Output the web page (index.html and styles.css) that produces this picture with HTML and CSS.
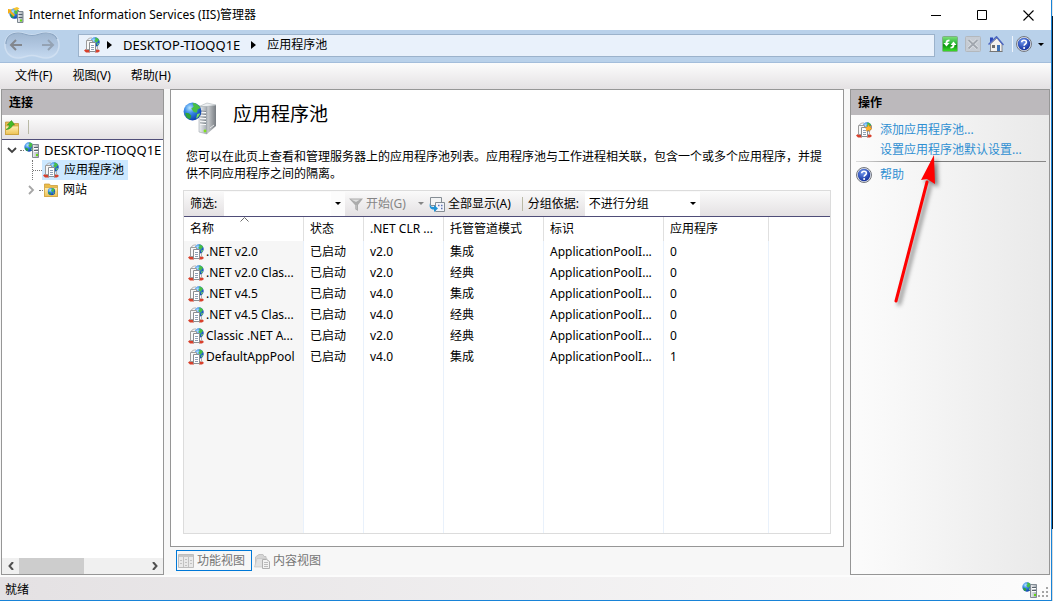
FILE: index.html
```html
<!DOCTYPE html>
<html lang="zh-CN">
<head>
<meta charset="utf-8">
<title>Internet Information Services (IIS)管理器</title>
<link rel="stylesheet" href="styles.css">
</head>
<body>
<svg class="sprite" width="0" height="0" aria-hidden="true">
  <defs>
    <radialGradient id="g-globe" cx="35%" cy="30%" r="75%"><stop offset="0" stop-color="#b8e6ff"/><stop offset=".4" stop-color="#3a8ce8"/><stop offset="1" stop-color="#0a3aa8"/></radialGradient>
    <linearGradient id="g-metal" x1="0" x2="1"><stop offset="0" stop-color="#eef0f2"/><stop offset="1" stop-color="#a3aab1"/></linearGradient>
    <linearGradient id="g-side" x1="0" x2="1"><stop offset="0" stop-color="#cfd2d5"/><stop offset="1" stop-color="#777c82"/></linearGradient>
    <linearGradient id="g-green" x1="0" x2="0" y1="0" y2="1"><stop offset="0" stop-color="#7fe07c"/><stop offset=".5" stop-color="#22b431"/><stop offset=".55" stop-color="#08900f"/><stop offset="1" stop-color="#3fe02c"/></linearGradient>
    <linearGradient id="g-folder" x1="0" x2="0" y1="0" y2="1"><stop offset="0" stop-color="#fff0b4"/><stop offset="1" stop-color="#edc254"/></linearGradient>
    <radialGradient id="g-help" cx="40%" cy="30%" r="70%"><stop offset="0" stop-color="#6f96ee"/><stop offset="1" stop-color="#122f9c"/></radialGradient>
    <linearGradient id="g-pill" x1="0" x2="0" y1="0" y2="1"><stop offset="0" stop-color="#9fb6d0"/><stop offset=".55" stop-color="#b2c8e2"/><stop offset="1" stop-color="#c6daf0"/></linearGradient>
  </defs>
  <symbol id="globe" viewBox="0 0 16 16">
    <circle cx="8" cy="8" r="7.500" fill="url(#g-globe)"/>
    <path d="M8 .8c3 0 5.500 1.700 6.700 4.300L12.500 6l-1 3-2.500-.5L7 5.500 9 4z" fill="#49c043"/>
    <path d="M2 9l3 .5 2 2-1 3C3 13.500 2 12 2 9z" fill="#2fa53a"/>
    <path d="M12 10l2.500-.5c-.6 2-2 3.600-3.500 4.500z" fill="#7be05d"/>
  </symbol>
  <symbol id="server" viewBox="0 0 16 16">
    <use href="#globe" x="0" y="0" width="10" height="10"/>
    <path d="M8.500 2.500h6v13h-6z" fill="url(#g-metal)" stroke="#828b94"/>
    <path d="M10 5.500h4M10 8.500h4" stroke="#59636d"/>
    <path d="M10 6.500h4M10 9.500h4" stroke="#fff"/>
    <path d="M12 12h2v2h-2z" fill="#63d812"/>
  </symbol>
  <symbol id="iis" viewBox="0 0 16 16">
    <use href="#globe" x="1" y="1" width="11" height="11"/>
    <path d="M0 2l4 .5L3 4l4 4-1.500 1.500L1.500 5.500 0 7z" fill="#f5ae18"/>
    <path d="M5 1.500L9 0l2.500 1.500L8 4z" fill="#f5c431"/>
    <path d="M9.500 4.500h5.500v11H9.500z" fill="url(#g-metal)" stroke="#7c8690"/>
    <path d="M10.500 7.500h4M10.500 10.500h4" stroke="#54616c"/>
    <path d="M12 12.500h2v2h-2z" fill="#63d812"/>
  </symbol>
  <symbol id="pool" viewBox="0 0 16 16">
    <use href="#globe" x="6" y="0" width="10" height="10"/>
    <path d="M0 13.500L2 12h4v3.500H2z" fill="#d8402c"/>
    <path d="M11 12.500h3.500l1.500 1.500-2 1.500h-3z" fill="#d8402c"/>
    <path d="M2.500 3.500h6v9h-6z" fill="#f7f7f7" stroke="#9c9c9c"/>
    <path d="M3.500 3C4 1.500 6 .8 8 1" fill="none" stroke="#b0b0b0"/>
    <path d="M5.500 5.500h6v9h-6z" fill="#fff" stroke="#8b8e91"/>
    <path d="M7 8.500h3M7 10.500h3M7 12.500h3" stroke="#8fa0b4"/>
    <path d="M13.500 9v4" stroke="#b0b0b0"/>
  </symbol>
  <symbol id="pool-add" viewBox="0 0 16 16">
    <use href="#pool" width="16" height="16"/>
    <path d="M12.500 2.500l.9 2 2.100-.7-.8 2 1.300 1.200-2 .5-.3 2-1.500-1.200-2 .8.400-2.100-1.400-1.300 2.100-.7z" fill="#ffb52b" stroke="#e88712" stroke-width=".5"/>
  </symbol>
  <symbol id="big-server" viewBox="0 0 34 34">
    <path d="M24 5l9-1v21l-9 8z" fill="url(#g-side)"/>
    <path d="M16 5.500l8-.5v28l-8-2z" fill="url(#g-metal)" stroke="#8f969c" stroke-width=".5"/>
    <path d="M16 5.500L24 2l9 2-9 1.500z" fill="#edf0f2" stroke="#9fa6ab" stroke-width=".5"/>
    <path d="M17 10l6 .5M17 13l6 .5M17 16l6 .5M17 19l6 .5M17 22l6 .5" stroke="#7d858c"/>
    <path d="M17 11l6 .5M17 14l6 .5M17 17l6 .5M17 20l6 .5M17 23l6 .5" stroke="#fff"/>
    <circle cx="22" cy="30" r="1.400" fill="#7fe01b"/>
    <path d="M27 27l4-3" stroke="#e4e6e8"/>
    <use href="#globe" x="0" y="1" width="19" height="19"/>
  </symbol>
  <symbol id="help" viewBox="0 0 16 16">
    <circle cx="8" cy="8" r="7.500" fill="#dfe3ea" stroke="#74787f"/>
    <circle cx="8" cy="8" r="6.200" fill="url(#g-help)"/>
    <path d="M5.700 6.300C5.700 3.500 10.400 3.500 10.400 6.200 10.400 8 8.100 8 8.100 9.800" fill="none" stroke="#fff" stroke-width="1.600"/>
    <circle cx="8.100" cy="12" r="1" fill="#fff"/>
  </symbol>
  <symbol id="refresh" viewBox="0 0 16 16">
    <rect x=".5" y=".5" width="15" height="15" rx="1" fill="url(#g-green)" stroke="#7fae86"/>
    <path d="M7.500 3.500C5 3.500 3.500 4.500 3.500 7H1.500l3 3.500 3-3.500h-2c0-1 .5-1.800 2-1.800z" fill="#fff"/>
    <path d="M8.500 12.500c2.500 0 4-1 4-3.500h2l-3-3.500-3 3.500h2c0 1-.5 1.800-2 1.800z" fill="#fff"/>
  </symbol>
  <symbol id="stop" viewBox="0 0 16 16">
    <rect x=".5" y=".5" width="15" height="15" rx="1" fill="#c6ccd4" stroke="#b3b8bd"/>
    <path d="M3.500 4l9 8.500M12.500 4l-9 8.500" stroke="#dfe3e7" stroke-width="3.200"/>
    <path d="M3.500 4l9 8.500M12.500 4l-9 8.500" stroke="#a0a6ae" stroke-width="1.800"/>
  </symbol>
  <symbol id="home" viewBox="0 0 16 16">
    <path d="M2 1.500h3V5L2 7z" fill="#2946b8"/>
    <path d="M2.500 8L9 2l5 6v7.500H2.500z" fill="#f3f1ee" stroke="#777" stroke-width=".8"/>
    <path d="M.5 8.500L8.500.8l7 8.200" fill="none" stroke="#4c66c0" stroke-width="1.500"/>
    <path d="M4 9h3v3H4z" fill="#6d6d6d"/><path d="M9 9h3v6.500H9z" fill="#3d72b6"/>
    <path d="M1.500 15.500h13" stroke="#757575"/>
  </symbol>
  <symbol id="folder-up" viewBox="0 0 16 16">
    <path d="M1.500 3h7l1 1.500h5v11h-13z" fill="#e8bb50" stroke="#b58c2c" stroke-width=".7"/>
    <path d="M1.500 7h13v8.500h-13z" fill="url(#g-folder)" stroke="#c79e3a" stroke-width=".7"/>
    <path d="M2 10.500c2-1 3-2.500 3.500-4.500H3.200L7.500 1.500 10.500 6H8.500c-.5 2.500-3 4.500-6.500 4.500z" fill="#43bb28" stroke="#2b8a1b" stroke-width=".5"/>
  </symbol>
  <symbol id="sites" viewBox="0 0 16 16">
    <path d="M1.500 2h5l1 1.500h7v11h-13z" fill="#edbd48" stroke="#c49431" stroke-width=".7"/>
    <path d="M1.500 5.500h13v9h-13z" fill="url(#g-folder)" stroke="#d1a442" stroke-width=".7"/>
    <use href="#globe" x="4.500" y="5.500" width="8" height="8"/>
  </symbol>
  <symbol id="funnel" viewBox="0 0 16 16">
    <path d="M1 2.500h14L10 9v6l-3-2V9z" fill="#ababab"/>
    <path d="M3 3.500h9L8 6z" fill="#dedede"/><path d="M8 9v4" stroke="#ccc"/>
  </symbol>
  <symbol id="show-all" viewBox="0 0 16 16">
    <path d="M1.500 1.500h11v8h-11z" fill="#f2f3f4" stroke="#858d94"/>
    <path d="M6.500 6.500h9v9h-9z" fill="#f2f4fa" stroke="#858d94"/>
    <path d="M9 9.500h1.500M12 9.500h1.500M12 12.500h1.500" stroke="#6172b2" stroke-width="1.500"/>
    <path d="M1 7c0 3.500 1.500 4 4 4V9l4 3.500L5 16v-2.500C1 13.500 0 11 1 7z" fill="#1f92d6"/>
  </symbol>
  <symbol id="features" viewBox="0 0 16 16">
    <path d="M.5 1.500h15v13H.5z" fill="#e9e9e9" stroke="#bdbdbd"/>
    <path d="M1 2h14v2H1z" fill="#c6c6c6"/><path d="M5.500 4v10M10.500 4v10" stroke="#c2c2c2"/>
    <path d="M2 7.500h2M2 10.500h2M7 6.500h2M7 9.500h2M7 12.500h2M12 7.500h2M12 10.500h2" stroke="#c2c2c2"/>
  </symbol>
  <symbol id="content" viewBox="0 0 16 16">
    <path d="M1.500 4L5 1.500h4l1 2h2v10H1.500z" fill="#d5d5d5" stroke="#c2c2c2"/>
    <path d="M3 5.500h10V14H.5z" fill="#e1e1e1" stroke="#c4c4c4" stroke-width=".7"/>
    <path d="M8.500 6.500h4l3 2v7h-7z" fill="#f2f2f2" stroke="#b0b0b0"/>
    <path d="M10 9.500h4M10 11.500h4M10 13.500h4" stroke="#bcbcbc"/>
  </symbol>
  <symbol id="tri-right" viewBox="0 0 5 8"><path d="M0 0l5 4-5 4z"/></symbol>
  <symbol id="tri-down" viewBox="0 0 6 3"><path d="M0 0h6L3 3z"/></symbol>
</svg>

<div class="app">
  <header class="titlebar">
    <svg class="icon"><use href="#iis"/></svg>
    <h1 class="window-title">Internet Information Services (IIS)管理器</h1>
    <button class="win-btn" aria-label="最小化"><svg width="11" height="11"><path d="M0 5.500h10" stroke="#000"/></svg></button>
    <button class="win-btn" aria-label="最大化"><svg width="11" height="11"><path d="M.5.5h9v9h-9z" fill="none" stroke="#000"/></svg></button>
    <button class="win-btn" aria-label="关闭"><svg width="11" height="11"><path d="M.5.5l10 10M10.500.5l-10 10" stroke="#000" stroke-width="1.100"/></svg></button>
  </header>

  <nav class="navbar">
    <div class="history">
      <svg class="pill" width="56" height="29" aria-hidden="true"><path d="M14 1.500C20 1.500 22 4 28 4S36 1.500 42 1.500C50 1.500 55 7 55 14S50 27 42 27C36 27 34 24.500 28 24.500S20 27 14 27C6 27 1 21 1 14S6 1.500 14 1.500z" fill="url(#g-pill)" stroke="#cfdff1" stroke-width="1.500"/><path d="M2 13C2 6 7 2 14 2 20 2 22 4.500 28 4.500S36 2 42 2C47 2 51 4 53 8" fill="none" stroke="#8ba5c2" stroke-width="1.200"/></svg>
      <button class="history-btn" aria-label="后退"><svg width="13" height="12"><path d="M7 1L2 6l5 5M2 6h11" fill="none" stroke="#83878e" stroke-width="2"/></svg></button>
      <button class="history-btn" aria-label="前进"><svg width="13" height="12"><path d="M6 1l5 5-5 5M11 6H0" fill="none" stroke="#94a2b3" stroke-width="2"/></svg></button>
    </div>
    <div class="address">
      <svg class="icon"><use href="#pool"/></svg>
      <svg class="crumb-arrow"><use href="#tri-right"/></svg>
      <a class="crumb host" href="#">DESKTOP-TIOQQ1E</a>
      <svg class="crumb-arrow"><use href="#tri-right"/></svg>
      <a class="crumb" href="#">应用程序池</a>
    </div>
    <div class="nav-tools">
      <button aria-label="刷新"><svg class="icon"><use href="#refresh"/></svg></button>
      <button aria-label="停止"><svg class="icon"><use href="#stop"/></svg></button>
      <button aria-label="主页"><svg class="icon"><use href="#home"/></svg></button>
      <button class="help-btn" aria-label="帮助"><svg class="icon"><use href="#help"/></svg><svg class="caret"><use href="#tri-down"/></svg></button>
    </div>
  </nav>

  <div class="menubar">
    <button>文件(F)</button>
    <button>视图(V)</button>
    <button>帮助(H)</button>
  </div>

  <main class="workspace">
    <aside class="panel connections">
      <h2 class="panel-title">连接</h2>
      <div class="conn-toolbar"><button aria-label="上一级"><svg class="icon"><use href="#folder-up"/></svg></button><span class="divider"></span></div>
      <ul class="tree">
        <li class="node root">
          <svg class="twisty" viewBox="0 0 10 10"><path d="M1 3l4 4 4-4" fill="none" stroke="#404040" stroke-width="1.800"/></svg>
          <span class="dots"></span><svg class="icon"><use href="#server"/></svg><span class="label host">DESKTOP-TIOQQ1E</span>
        </li>
        <li class="node child pools">
          <span class="dots long"></span><span class="selected"><svg class="icon"><use href="#pool"/></svg><span class="label">应用程序池</span></span>
        </li>
        <li class="node child">
          <svg class="twisty" viewBox="0 0 10 10"><path d="M3 1l4 4-4 4" fill="none" stroke="#a6a6a6" stroke-width="1.800"/></svg>
          <span class="dots"></span><svg class="icon"><use href="#sites"/></svg><span class="label">网站</span>
        </li>
      </ul>
      <div class="scrollbar">
        <button aria-label="向左滚动"><svg width="6" height="8"><path d="M5 0L1.500 4 5 8" fill="none" stroke="#505050" stroke-width="2"/></svg></button>
        <div class="track"><div class="thumb"></div></div>
        <button aria-label="向右滚动"><svg width="6" height="8"><path d="M1 0l3.500 4L1 8" fill="none" stroke="#505050" stroke-width="2"/></svg></button>
      </div>
    </aside>

    <section class="center">
      <div class="panel feature">
        <div class="feature-head"><svg class="big-icon"><use href="#big-server"/></svg><h2 class="feature-title">应用程序池</h2></div>
        <p class="description">您可以在此页上查看和管理服务器上的应用程序池列表。应用程序池与工作进程相关联，包含一个或多个应用程序，并提供不同应用程序之间的隔离。</p>
        <div class="list">
          <div class="list-toolbar">
            <label class="filter-label" for="filter">筛选:</label>
            <div class="combo"><input id="filter" type="text"><button class="combo-btn" aria-label="展开"><svg class="caret"><use href="#tri-down"/></svg></button></div>
            <button class="tool start" disabled><svg class="icon"><use href="#funnel"/></svg>开始(G)<svg class="caret"><use href="#tri-down"/></svg></button>
            <button class="tool"><svg class="icon"><use href="#show-all"/></svg>全部显示(A)</button>
            <span class="divider"></span>
            <label class="group-label" for="group">分组依据:</label>
            <div class="combo group"><select id="group"><option>不进行分组</option></select><svg class="caret"><use href="#tri-down"/></svg></div>
          </div>
          <table class="grid">
            <colgroup><col class="w-name"><col class="w-state"><col class="w-clr"><col class="w-mode"><col class="w-id"><col class="w-apps"><col></colgroup>
            <thead><tr><th><svg class="sort" width="9" height="5"><path d="M.5 4.500l4-4 4 4" fill="none" stroke="#6b6b6b"/></svg>名称</th><th>状态</th><th>.NET CLR ...</th><th>托管管道模式</th><th>标识</th><th>应用程序</th><th></th></tr></thead>
            <tbody>
              <tr><td><span class="cell"><svg class="icon"><use href="#pool"/></svg>.NET v2.0</span></td><td>已启动</td><td>v2.0</td><td>集成</td><td>ApplicationPoolI...</td><td>0</td><td></td></tr>
              <tr><td><span class="cell"><svg class="icon"><use href="#pool"/></svg>.NET v2.0 Clas...</span></td><td>已启动</td><td>v2.0</td><td>经典</td><td>ApplicationPoolI...</td><td>0</td><td></td></tr>
              <tr><td><span class="cell"><svg class="icon"><use href="#pool"/></svg>.NET v4.5</span></td><td>已启动</td><td>v4.0</td><td>集成</td><td>ApplicationPoolI...</td><td>0</td><td></td></tr>
              <tr><td><span class="cell"><svg class="icon"><use href="#pool"/></svg>.NET v4.5 Clas...</span></td><td>已启动</td><td>v4.0</td><td>经典</td><td>ApplicationPoolI...</td><td>0</td><td></td></tr>
              <tr><td><span class="cell"><svg class="icon"><use href="#pool"/></svg>Classic .NET A...</span></td><td>已启动</td><td>v2.0</td><td>经典</td><td>ApplicationPoolI...</td><td>0</td><td></td></tr>
              <tr><td><span class="cell"><svg class="icon"><use href="#pool"/></svg>DefaultAppPool</span></td><td>已启动</td><td>v4.0</td><td>集成</td><td>ApplicationPoolI...</td><td>1</td><td></td></tr>
              <tr class="filler"><td></td><td></td><td></td><td></td><td></td><td></td><td></td></tr>
            </tbody>
          </table>
        </div>
      </div>
      <div class="views">
        <button class="view active"><svg class="icon"><use href="#features"/></svg>功能视图</button>
        <button class="view"><svg class="icon"><use href="#content"/></svg>内容视图</button>
      </div>
    </section>

    <aside class="panel actions">
      <h2 class="panel-title">操作</h2>
      <div class="action-list">
        <a class="action" href="#"><svg class="icon"><use href="#pool-add"/></svg>添加应用程序池...</a>
        <a class="action" href="#"><span class="icon"></span>设置应用程序池默认设置...</a>
        <hr class="rule">
        <a class="action" href="#"><svg class="icon"><use href="#help"/></svg>帮助</a>
      </div>
      <svg class="pointer" width="60" height="160" aria-hidden="true"><path d="M16 146L47 27" stroke="#f00" stroke-width="3" stroke-linecap="round"/><path d="M54 0L41 25l6-1 8 5z" fill="#f00"/></svg>
    </aside>
  </main>

  <footer class="statusbar">
    <span>就绪</span>
    <svg class="icon"><use href="#server"/></svg>
    <svg class="grip" width="11" height="11"><path d="M8 1h2v2H8zM4 5h2v2H4zM8 5h2v2H8zM0 9h2v2H0zM4 9h2v2H4zM8 9h2v2H8z" fill="#a5a5a5"/></svg>
  </footer>
</div>
</body>
</html>
```
FILE: styles.css
```css
* { box-sizing: border-box; }
html, body { height: 100%; }
body {
  margin: 0;
  padding-right: 1px;
  background: linear-gradient(#e4e4e4 16px, #0d1620 16px, #0d1620 88%, #dcdcdc 88%);
  color: #000;
  font: 12px/16px "Noto Sans", "Noto Sans CJK SC", sans-serif;
  overflow: hidden;
}
button, input, select { font: inherit; color: inherit; margin: 0; padding: 0; border: 0; background: none; }
h1, h2, p, ul { margin: 0; padding: 0; }
h1, h2, th { font-size: inherit; font-weight: normal; }
a { color: inherit; text-decoration: none; }
svg { display: block; flex: none; }
.sprite { position: absolute; }
.icon { width: 16px; height: 16px; flex: none; }
.caret { width: 6px; height: 3px; }
.host { font-size: 13px; }

.app {
  display: flex;
  flex-direction: column;
  height: 100%;
  background: #f7f7f7;
  border-right: 1px solid #1883d7;
  border-bottom: 1px solid #1883d7;
}

.titlebar { display: flex; align-items: center; height: 30px; padding-left: 8px; background: #fff; }
.window-title { flex: 1; padding-left: 5px; }
.win-btn { width: 46px; height: 30px; display: grid; place-items: center; }

.navbar {
  display: flex;
  align-items: center;
  height: 33px;
  padding: 0 7px 2px 4px;
  background: #b9d1ea;
  border-bottom: 1px solid #a3bddb;
}
.history { position: relative; display: flex; align-items: center; justify-content: space-between; width: 56px; height: 29px; padding: 0 5px; }
.pill { position: absolute; inset: 0; }
.history-btn { position: relative; }
.address {
  flex: 1;
  display: flex;
  align-items: center;
  height: 23px;
  margin-left: 18px;
  padding-left: 5px;
  background: #e9f1fb;
  border: 1px solid #9bb2cb;
}
.crumb-arrow { width: 5px; height: 8px; margin: 0 11px; }
.crumb-arrow:nth-child(2) { margin-left: 7px; }
.nav-tools { display: flex; gap: 7px; padding-left: 7px; margin-bottom: 2px; }
.help-btn { display: flex; align-items: center; gap: 6px; margin-left: 1px; padding-left: 3px; border-left: 1px solid #eef4fb; }

.menubar { display: flex; gap: 20px; height: 26px; padding-left: 15px; background: linear-gradient(#fcfcfc, #e4e1e3); }

.workspace { flex: 1; display: flex; gap: 6px; min-height: 0; padding: 0 1px; }
.panel { border: 1px solid #969696; background: #fff; }
.panel-title { height: 25px; padding-left: 7px; line-height: 25px; background: #bcb9bc; font-weight: bold; }

.connections { display: flex; flex-direction: column; width: 163px; }
.conn-toolbar { display: flex; align-items: center; height: 25px; padding-left: 2px; gap: 8px; background: linear-gradient(#fcfcfc, #e4e1e3); border-bottom: 1px solid #4f4d78; }
.divider { width: 1px; height: 14px; background: #b9b9a5; }
.tree { flex: 1; padding-left: 5px; list-style: none; overflow: hidden; }
.node { display: flex; align-items: center; height: 20px; white-space: nowrap; }
.child { padding-left: 19px; }
.twisty { width: 10px; height: 10px; }
.dots { width: 4px; margin: 0 0 0 3px; border-top: 1px dotted #777; }
.dots.long { width: 9px; margin: 0; }
.pools { padding-left: 25px; }
.pools::before { content: ""; height: 20px; border-left: 1px dotted #777; }
.selected { display: flex; align-items: center; height: 20px; padding: 0 4px 0 1px; background: #cce8ff; }
.label { padding-left: 4px; }
.selected .label { padding-left: 5px; }
.scrollbar { display: flex; height: 16px; background: #f0f0f0; }
.scrollbar button { width: 17px; display: grid; place-items: center; }
.track { flex: 1; }
.thumb { width: 51%; height: 100%; background: #cdcdcd; }

.center { flex: 1; display: flex; flex-direction: column; min-width: 0; }
.feature { flex: 1; display: flex; flex-direction: column; min-height: 0; padding: 8px 12px 12px; }
.feature-head { display: flex; align-items: flex-start; height: 48px; padding-top: 3px; }
.big-icon { width: 34px; height: 34px; }
.feature-title { padding-left: 16px; font-size: 19px; line-height: 26px; }
.description { padding: 2px 3px 8px; line-height: 17px; }
.list { flex: 1; display: flex; flex-direction: column; min-height: 0; border: 1px solid #dcdcdc; }
.list-toolbar { display: flex; align-items: center; height: 26px; background: linear-gradient(#fafafa, #e4e1e3); border-bottom: 1px solid #4f4d78; white-space: nowrap; }
.filter-label { width: 40px; padding-left: 6px; }
.combo { display: flex; align-items: center; width: 121px; height: 24px; background: #fff; }
.combo input { flex: 1; min-width: 0; height: 100%; padding: 0 4px; }
.combo-btn { width: 14px; height: 100%; display: grid; place-items: center; background: #fcfcfc; }
.combo.group { width: 115px; padding-right: 4px; }
.combo select { flex: 1; appearance: none; padding-left: 4px; }
.tool { display: flex; align-items: center; gap: 3px; }
.start { margin: 0 5px 0 3px; color: #858585; fill: #858585; gap: 2px; }
.start .caret { margin-left: 10px; }
.list-toolbar .divider { margin: 0 5px 0 11px; }
.group-label { width: 57px; }

.grid { flex: 1; width: 100%; table-layout: fixed; border-collapse: separate; border-spacing: 0; }
.w-name, .w-id { width: 120px; }
.w-state { width: 60px; }
.w-clr { width: 80px; }
.w-mode { width: 100px; }
.w-apps { width: 105px; }
.grid th, .grid td { height: 21px; padding: 0 0 0 6px; text-align: left; white-space: nowrap; border-right: 1px solid #e9f1fb; }
.grid th { position: relative; height: 24px; border-right-color: #e0e0e0; }
.grid th:last-child, .grid td:last-child { border-right: 0; }
.grid td:first-child { padding-left: 4px; background: #f6f6f6; }
.grid .filler td { height: auto; }
.sort { position: absolute; left: 56px; top: 0; }
.cell { display: flex; align-items: center; gap: 2px; }

.views { display: flex; height: 28px; padding: 3px 6px 4px; }
.view { display: flex; align-items: center; gap: 3px; height: 21px; padding: 0 2px; color: #757575; }
.view.active { padding: 0 6px 0 1px; border: 1px solid #0078d7; }

.actions { position: relative; width: 200px; background: linear-gradient(90deg, #fcfcfc, #e9e9e9); }
.action-list { padding: 5px 3px 0 5px; }
.action { display: flex; align-items: center; gap: 8px; height: 20px; color: #2f8fd2; }
.rule { height: 1px; margin: 1px 0 3px; border: 0; background: linear-gradient(90deg, #ddd, #777 30%, #888); }
.pointer { position: absolute; left: 29px; top: 65px; filter: drop-shadow(3px 3px 2px rgba(0, 0, 0, .5)); }

.statusbar { display: flex; align-items: center; height: 25px; padding: 2px 2px 0 5px; background: linear-gradient(90deg, #e4e1e3, #fcfcfc); border-top: 2px solid #fcfcfc; }
.statusbar span { flex: 1; }
.grip { align-self: flex-end; margin-bottom: 3px; }
```
